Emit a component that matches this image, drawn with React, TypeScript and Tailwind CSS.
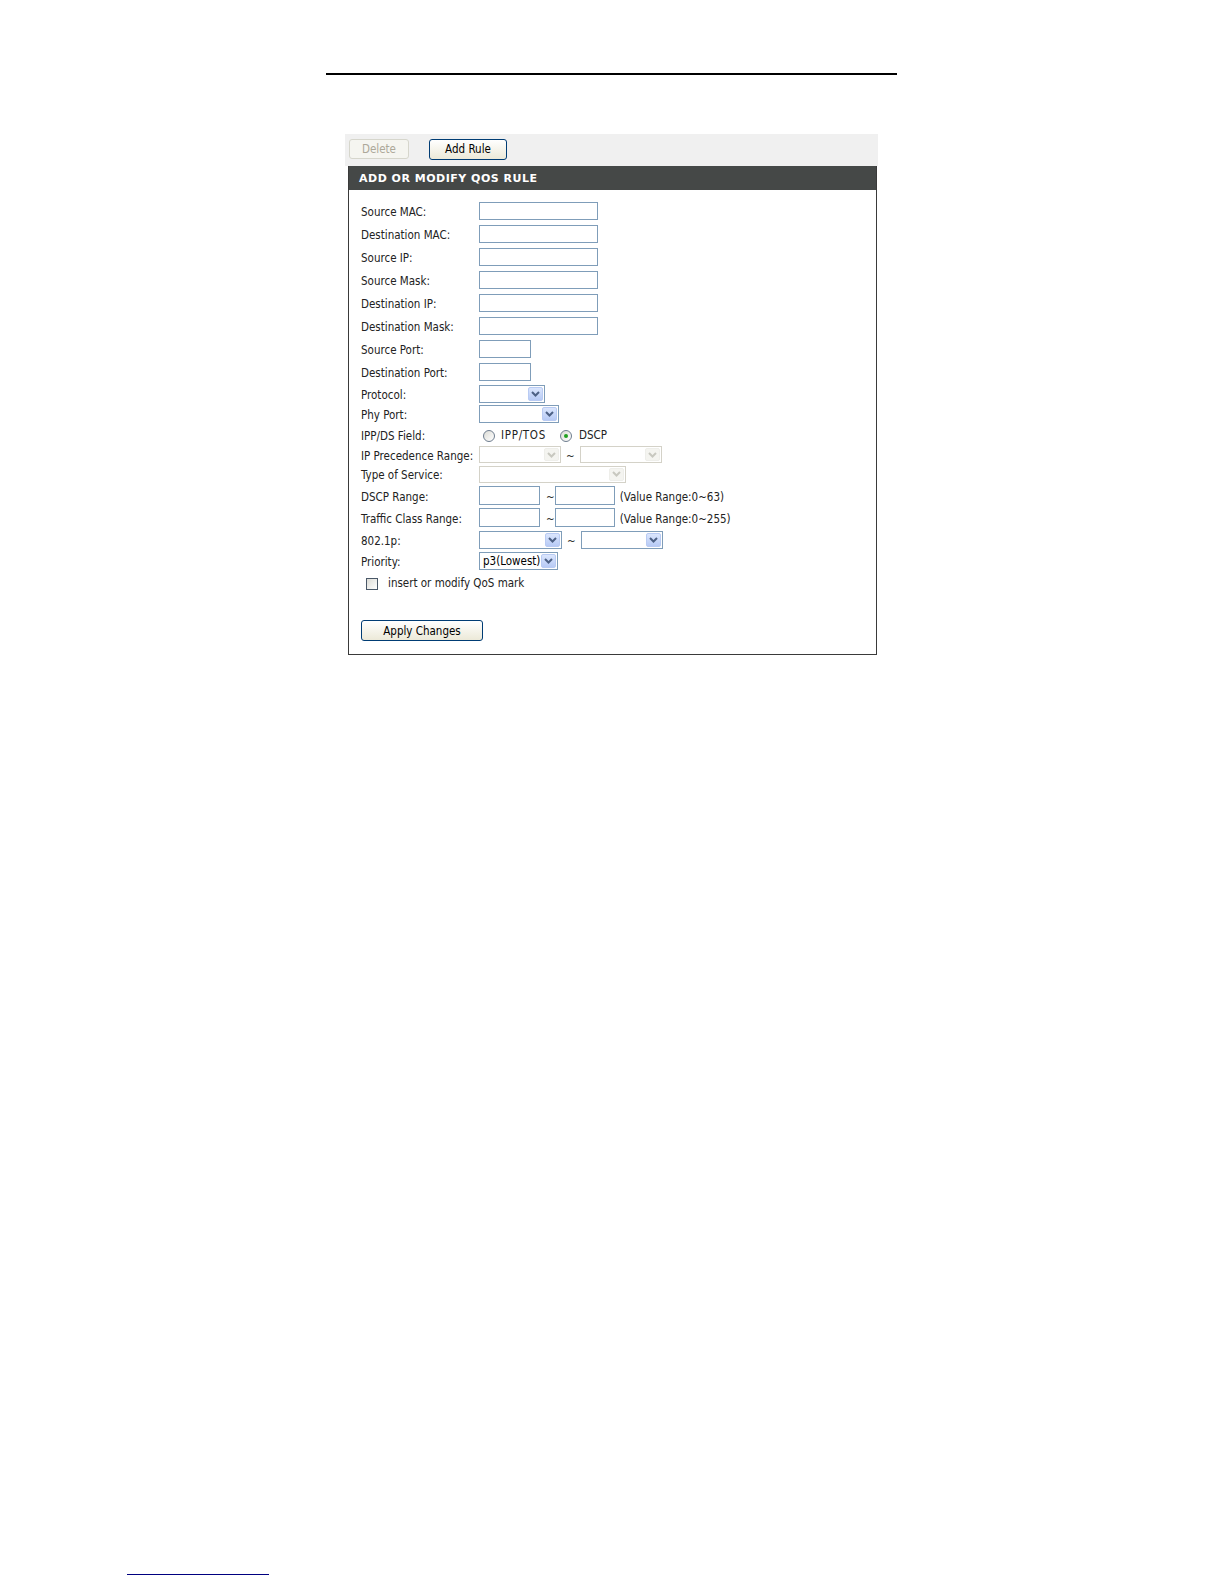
import type { ReactNode } from 'react';

const FONT = '"DejaVu Sans Condensed", "Liberation Sans", sans-serif';

function Chevron({ disabled }: { disabled?: boolean }) {
  return (
    <svg width="9" height="6" viewBox="0 0 9 6">
      <path
        d="M1 1 L4.5 4.5 L8 1"
        fill="none"
        stroke={disabled ? '#c8c8c0' : '#4d6185'}
        strokeWidth="2"
      />
    </svg>
  );
}

function XpSelect({
  className,
  value,
  disabled,
}: {
  className: string;
  value?: string;
  disabled?: boolean;
}) {
  return (
    <div
      className={`flex items-stretch bg-white p-px ${
        disabled ? 'border border-[#d4d2c8]' : 'border border-[#7f9db9]'
      } ${className}`}
    >
      <div className="flex flex-1 items-center pl-[2px] pt-px text-[11.5px] leading-none text-black">
        {value}
      </div>
      <div
        className={`flex w-[15px] items-center justify-center rounded-[2px] border ${
          disabled
            ? 'border-[#eeeeea] bg-[#f4f4f0]'
            : 'border-[#b9cbf3] bg-gradient-to-b from-[#dbe6fd] to-[#b7caf5]'
        }`}
      >
        <Chevron disabled={disabled} />
      </div>
    </div>
  );
}

function XpInput({ className }: { className: string }) {
  return <div className={`border border-[#7f9db9] bg-white ${className}`} />;
}

function Tilde() {
  return <span className="text-[11.5px] text-[#333]">~</span>;
}

function Row({
  label,
  h,
  children,
}: {
  label: string;
  h: string;
  children?: ReactNode;
}) {
  return (
    <div className={`flex items-center ${h}`}>
      <div className="w-[118px] shrink-0 translate-y-[2px] whitespace-nowrap text-[11.5px] text-[#222]">
        {label}
      </div>
      <div className="flex items-center">{children}</div>
    </div>
  );
}

function Radio({ checked }: { checked?: boolean }) {
  return (
    <span className="flex h-[12px] w-[12px] items-center justify-center rounded-full border border-[#6e7d8f] bg-gradient-to-br from-[#dcdcd6] to-white">
      {checked && <span className="h-[4px] w-[4px] rounded-full bg-[#21a121]" />}
    </span>
  );
}

export default function App() {
  return (
    <div className="min-h-[1584px] bg-white pt-[73px]" style={{ fontFamily: FONT }}>
      {/* top rule */}
      <div className="ml-[326px] h-[1.5px] w-[571px] bg-black" />

      <div className="ml-[345px] mt-[59px] w-[533px]">
        {/* toolbar */}
        <div className="flex h-[32px] items-start gap-[20px] bg-[#f0f0f0] pl-[4px] pt-[5px]">
          <button className="h-[20px] w-[60px] rounded-[3px] border border-[#d6d6cc] bg-[#f5f5f0] pt-px text-[11.5px] text-[#aca899]">
            Delete
          </button>
          <button className="h-[21px] w-[78px] rounded-[3px] border border-[#003c74] bg-gradient-to-b from-white to-[#ece9d8] pt-px text-[11.5px] text-black">
            Add Rule
          </button>
        </div>

        {/* form box */}
        <div className="ml-[3px] w-[529px] border border-t-0 border-[#3a3a3a]">
          <div
            className="flex h-[24px] items-center bg-[#454847] pl-[10px] text-[11px] font-bold tracking-[0.5px] text-white"
            style={{ fontFamily: '"DejaVu Sans", sans-serif' }}
          >
            <span className="translate-y-[2px]">ADD OR MODIFY QOS RULE</span>
          </div>

          <div className="flex flex-col pl-[12px] pt-[10px]">
            <Row label="Source MAC:" h="h-[23px]">
              <XpInput className="h-[18px] w-[119px]" />
            </Row>
            <Row label="Destination MAC:" h="h-[23px]">
              <XpInput className="h-[18px] w-[119px]" />
            </Row>
            <Row label="Source IP:" h="h-[23px]">
              <XpInput className="h-[18px] w-[119px]" />
            </Row>
            <Row label="Source Mask:" h="h-[23px]">
              <XpInput className="h-[18px] w-[119px]" />
            </Row>
            <Row label="Destination IP:" h="h-[23px]">
              <XpInput className="h-[18px] w-[119px]" />
            </Row>
            <Row label="Destination Mask:" h="h-[23px]">
              <XpInput className="h-[18px] w-[119px]" />
            </Row>
            <Row label="Source Port:" h="h-[23px]">
              <XpInput className="h-[18px] w-[52px]" />
            </Row>
            <Row label="Destination Port:" h="h-[23px]">
              <XpInput className="h-[18px] w-[52px]" />
            </Row>
            <Row label="Protocol:" h="h-[20px]">
              <XpSelect className="h-[18px] w-[66px]" />
            </Row>
            <Row label="Phy Port:" h="h-[20px]">
              <XpSelect className="h-[18px] w-[80px]" />
            </Row>
            <Row label="IPP/DS Field:" h="h-[22px]">
              <div className="flex translate-y-px items-center text-[11.5px] text-[#222]">
                <span className="ml-[4px]">
                  <Radio />
                </span>
                <span className="ml-[6px] tracking-[0.7px]">IPP/TOS</span>
                <span className="ml-[14px]">
                  <Radio checked />
                </span>
                <span className="ml-[7px]">DSCP</span>
              </div>
            </Row>
            <Row label="IP Precedence Range:" h="h-[18px]">
              <XpSelect className="h-[17px] w-[82px]" disabled />
              <span className="mx-[5px]">
                <Tilde />
              </span>
              <XpSelect className="h-[17px] w-[82px]" disabled />
            </Row>
            <Row label="Type of Service:" h="h-[21px]">
              <XpSelect className="h-[17px] w-[147px]" disabled />
            </Row>
            <Row label="DSCP Range:" h="h-[22px]">
              <XpInput className="h-[19px] w-[61px]" />
              <span className="ml-[6px]">
                <Tilde />
              </span>
              <XpInput className="h-[19px] w-[60px]" />
              <span className="ml-[5px] translate-y-[2px] text-[11.5px] text-[#222]">
                (Value Range:0~63)
              </span>
            </Row>
            <Row label="Traffic Class Range:" h="h-[22px]">
              <XpInput className="h-[19px] w-[61px]" />
              <span className="ml-[6px]">
                <Tilde />
              </span>
              <XpInput className="h-[19px] w-[60px]" />
              <span className="ml-[5px] translate-y-[2px] text-[11.5px] text-[#222]">
                (Value Range:0~255)
              </span>
            </Row>
            <Row label="802.1p:" h="h-[22px]">
              <XpSelect className="h-[18px] w-[83px]" />
              <span className="mx-[5px]">
                <Tilde />
              </span>
              <XpSelect className="h-[18px] w-[82px]" />
            </Row>
            <Row label="Priority:" h="h-[21px]">
              <XpSelect className="h-[18px] w-[79px]" value="p3(Lowest)" />
            </Row>
            <div className="flex h-[24px] items-center pl-[5px]">
              <span className="h-[12px] w-[12px] border border-[#4a5868] bg-gradient-to-br from-[#dcdcd6] to-white" />
              <span className="ml-[10px] text-[11.5px] text-[#222]">
                insert or modify QoS mark
              </span>
            </div>

            <div className="mt-[22px] pb-[12px]">
              <button className="h-[21px] w-[122px] rounded-[3px] border border-[#003c74] bg-gradient-to-b from-white to-[#ece9d8] pt-px text-[11.5px] text-black">
                Apply Changes
              </button>
            </div>
          </div>
        </div>
      </div>

      {/* footer rule */}
      <div className="ml-[127px] mt-[919px] h-px w-[142px] bg-[#000080]" />
    </div>
  );
}
